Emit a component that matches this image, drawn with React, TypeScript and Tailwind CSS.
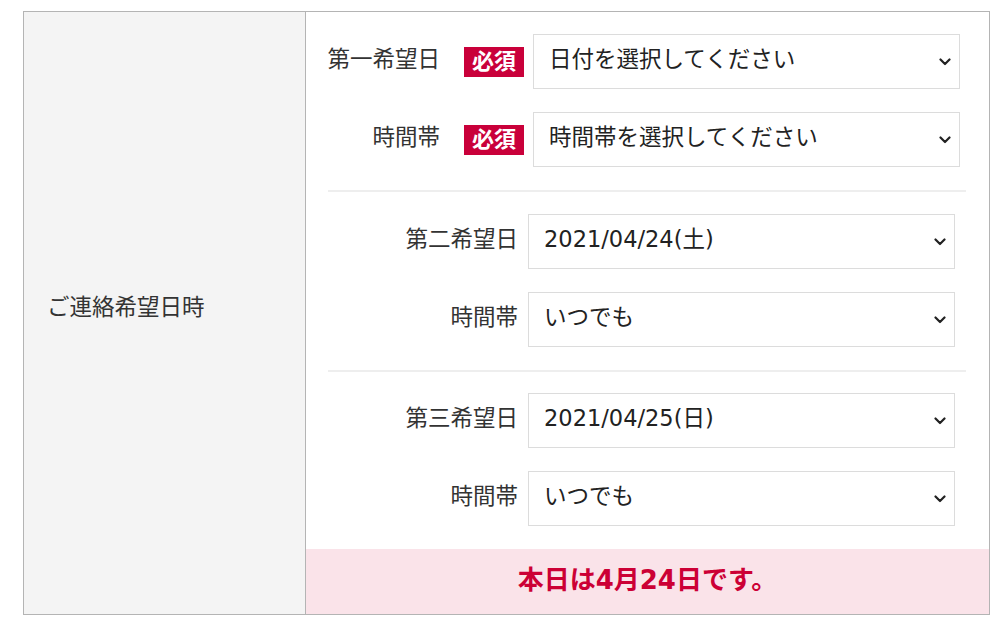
import React from "react";

const font = { fontFamily: '"DejaVu Sans", "Noto Sans CJK JP", "Noto Sans", sans-serif' };

function Chevron() {
  return (
    <svg width="12" height="8" viewBox="0 0 12 8" className="shrink-0">
      <path d="M1.5 1.5 L6 6 L10.5 1.5" fill="none" stroke="#222" strokeWidth="2.2" strokeLinecap="round" strokeLinejoin="round" />
    </svg>
  );
}

function Select({ text }: { text: string }) {
  return (
    <div className="flex-1 h-[55px] border border-[#dcdcdc] bg-white flex items-center justify-between pl-[15px] pr-[8px] text-[22.5px] text-[#222]">
      <span className="-mt-[3px] whitespace-nowrap">{text}</span>
      <Chevron />
    </div>
  );
}

function Badge() {
  return (
    <div className="w-[60px] h-[30px] bg-[#c9003a] text-white font-bold text-[22px] flex items-center justify-center leading-none whitespace-nowrap">
      必須
    </div>
  );
}

function RequiredRow({ label, text }: { label: string; text: string }) {
  return (
    <div className="flex items-center">
      <div className="w-[112px] shrink-0 whitespace-nowrap flex justify-end text-[22.5px] text-[#333] -mt-[3px]">{label}</div>
      <div className="ml-[24px] shrink-0">
        <Badge />
      </div>
      <div className="ml-[9px] flex flex-1">
        <Select text={text} />
      </div>
    </div>
  );
}

function Row({ label, text }: { label: string; text: string }) {
  return (
    <div className="flex items-center">
      <div className="w-[190px] shrink-0 whitespace-nowrap text-right text-[22.5px] text-[#333] -mt-[3px]">{label}</div>
      <div className="ml-[10px] flex flex-1">
        <Select text={text} />
      </div>
    </div>
  );
}

function Divider() {
  return <div className="ml-[22px] mr-[23px] h-[2px] bg-[#eeeeee]" />;
}

export default function App() {
  return (
    <div className="w-[1007px] h-[626px] bg-white pt-[11px] pl-[23px]" style={font}>
      <div className="flex w-[967px] h-[604px] border border-[#b4b4b4]">
        <div className="w-[282px] shrink-0 whitespace-nowrap bg-[#f4f4f4] border-r border-[#b4b4b4] flex items-center pl-[23px] pb-[10px] text-[22.5px] text-[#333]">
          ご連絡希望日時
        </div>
        <div className="flex-1 flex flex-col">
          <div className="pt-[22px] pb-[23px] pl-[22px] pr-[29px] flex flex-col gap-[23px]">
            <RequiredRow label="第一希望日" text="日付を選択してください" />
            <RequiredRow label="時間帯" text="時間帯を選択してください" />
          </div>
          <Divider />
          <div className="pt-[22px] pb-[23px] pl-[22px] pr-[34px] flex flex-col gap-[23px]">
            <Row label="第二希望日" text="2021/04/24(土)" />
            <Row label="時間帯" text="いつでも" />
          </div>
          <Divider />
          <div className="pt-[21px] pb-[23px] pl-[22px] pr-[34px] flex flex-col gap-[23px]">
            <Row label="第三希望日" text="2021/04/25(日)" />
            <Row label="時間帯" text="いつでも" />
          </div>
          <div className="flex-1 bg-[#fae3e9] flex items-center justify-center text-[26px] font-bold text-[#cc0035]">
            <span className="-mt-[3px] whitespace-nowrap">本日は4月24日です。</span>
          </div>
        </div>
      </div>
    </div>
  );
}
